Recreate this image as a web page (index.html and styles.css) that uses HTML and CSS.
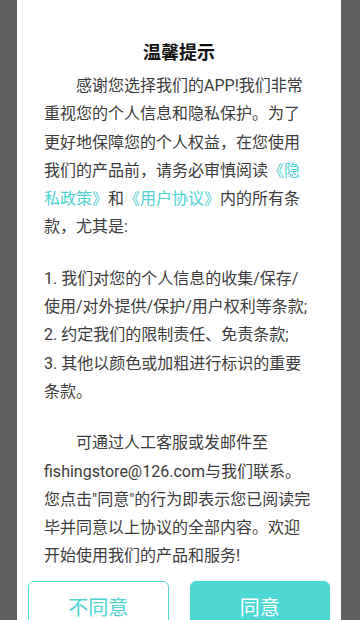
FILE: index.html
```html
<!DOCTYPE html>
<html lang="zh-CN">
<head>
  <meta charset="UTF-8">
  <meta name="viewport" content="width=device-width, initial-scale=1.0">
  <title>温馨提示</title>
  <link rel="stylesheet" href="styles.css">
</head>
<body>

  <div class="privacy-dialog">
    <h2 class="dialog-title">温馨提示</h2>

    <div class="dialog-body">
      <p class="indent">感谢您选择我们的APP!我们非常重视您的个人信息和隐私保护。为了更好地保障您的个人权益，在您使用我们的产品前，请务必审慎阅读<a class="link">《隐私政策》</a>和<a class="link">《用户协议》</a>内的所有条款，尤其是:</p>
      <p>1. 我们对您的个人信息的收集/保存/使用/对外提供/保护/用户权利等条款;<br>2. 约定我们的限制责任、免责条款;<br>3. 其他以颜色或加粗进行标识的重要条款。</p>
      <p class="indent">可通过人工客服或发邮件至fishingstore@126.com与我们联系。您点击"同意"的行为即表示您已阅读完毕并同意以上协议的全部内容。欢迎开始使用我们的产品和服务!</p>
    </div>

    <div class="dialog-footer">
      <button class="btn btn-outline">不同意</button>
      <button class="btn btn-fill">同意</button>
    </div>
  </div>

</body>
</html>
```

FILE: styles.css
```css
html, body {
  margin: 0;
  height: 620px;
  overflow: hidden;
}

body {
  background-color: #5f5f5f;
  font-family: Roboto, "Noto Sans CJK SC", sans-serif;
}

.privacy-dialog {
  width: 324px;
  margin-left: 17px;
  padding-top: 39px;
  background-color: #fff;
  min-height: 700px;
  box-sizing: border-box;
}

.dialog-title {
  margin: 0 0 5px;
  font-size: 18px;
  line-height: 28px;
  font-weight: bold;
  color: #111;
  text-align: center;
}

.dialog-body {
  padding: 0 27px;
  font-size: 16px;
  line-height: 28.3px;
  color: #3c3c3c;
}

.dialog-body p {
  margin: 0 0 23px;
}

.dialog-body p:last-child {
  margin-bottom: 0;
}

.dialog-body .indent {
  text-indent: 2em;
}

.link {
  color: #4fd2d2;
  text-decoration: none;
}

.dialog-footer {
  display: flex;
  gap: 21px;
  padding: 0 11px;
  margin-top: 10px;
}

.btn {
  flex: 1;
  height: 52px;
  border-radius: 6px;
  font-family: Roboto, "Noto Sans CJK SC", sans-serif;
  font-size: 20px;
  cursor: pointer;
}

.btn-outline {
  background: #fff;
  border: 1px solid #5ad5d5;
  color: #4fd2d2;
}

.btn-fill {
  background: #4dd8d6;
  border: 1px solid #4dd8d6;
  color: #fff;
}
```
